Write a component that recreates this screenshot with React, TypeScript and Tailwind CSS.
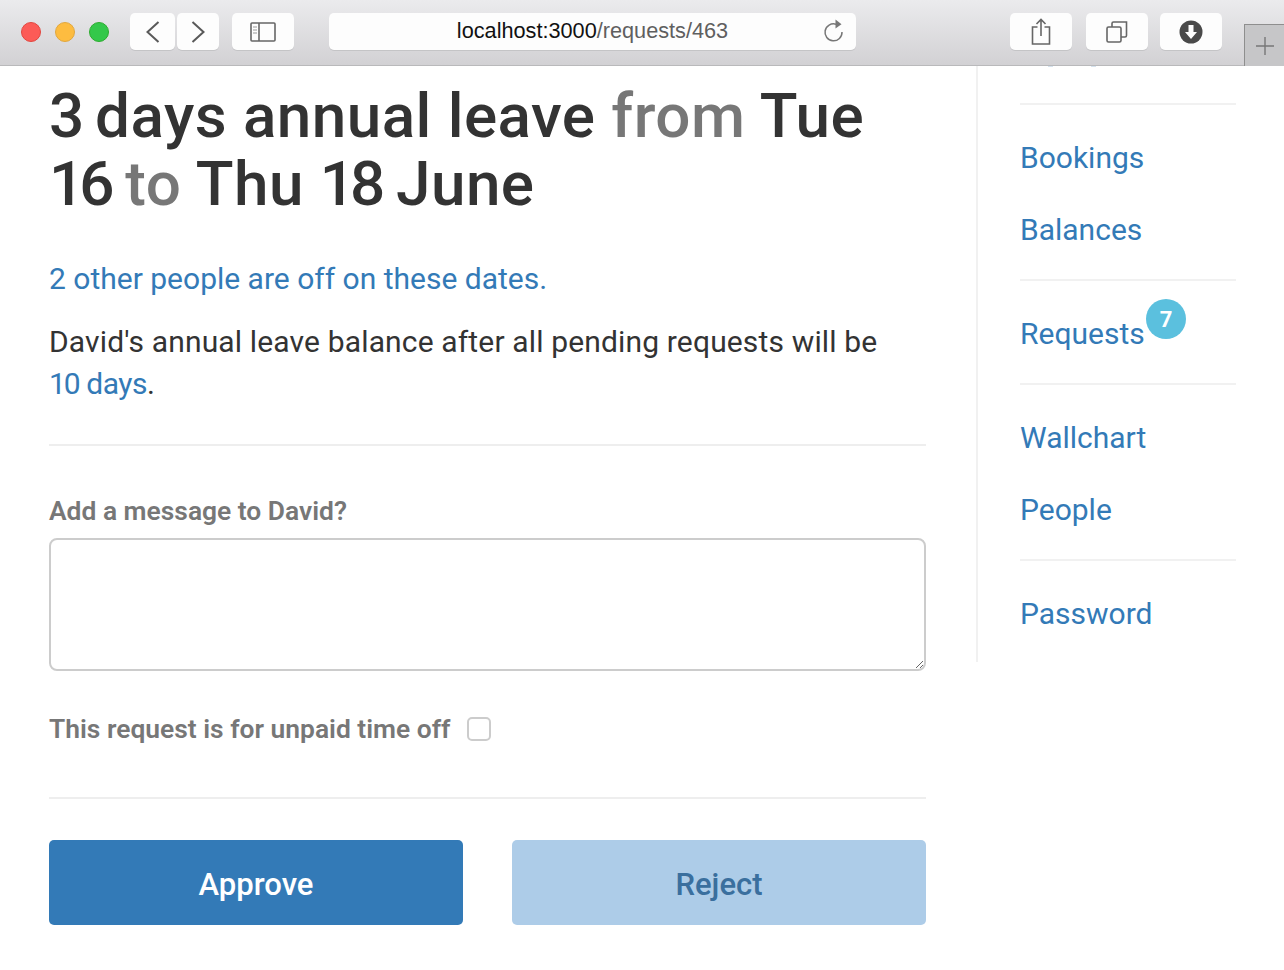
const font = { fontFamily: '"Roboto", "Liberation Sans", sans-serif' }

function ToolButton({ className, children }: { className: string; children: React.ReactNode }) {
  return (
    <div className={`flex h-[37px] items-center justify-center rounded-[5px] bg-[#fdfdfd] shadow-[0_1px_0_#c4c4c6] ${className}`}>
      {children}
    </div>
  )
}

function Toolbar() {
  return (
    <div className="relative flex h-[66px] items-start border-b border-[#b9b9bb] bg-gradient-to-b from-[#ebebed] to-[#d2d1d4] pl-[21px] pt-[13px]">
      <div className="mt-[9px] flex gap-[14px]">
        <span className="size-[20px] rounded-full border border-[#e2463f] bg-[#fc5b57]" />
        <span className="size-[20px] rounded-full border border-[#e1a73e] bg-[#fdbc40]" />
        <span className="size-[20px] rounded-full border border-[#2dac2f] bg-[#34c84a]" />
      </div>
      <ToolButton className="ml-[21px] w-[45px]">
        <svg width="14" height="22" viewBox="0 0 14 22" fill="none" stroke="#595959" strokeWidth="2">
          <path d="M12.500 1L1.500 11l11 10" />
        </svg>
      </ToolButton>
      <ToolButton className="ml-[2px] w-[42px]">
        <svg width="14" height="22" viewBox="0 0 14 22" fill="none" stroke="#595959" strokeWidth="2">
          <path d="M1.500 1l11 10-11 10" />
        </svg>
      </ToolButton>
      <ToolButton className="ml-[13px] w-[62px]">
        <svg width="26" height="20" viewBox="0 0 26 20" fill="none" stroke="#666" strokeWidth="1.6">
          <rect x="1" y="1" width="24" height="18" rx="1" />
          <path d="M9 1v18" />
          <path d="M3 5h4M3 8h4M3 11h4" strokeWidth="1.2" stroke="#999" />
        </svg>
      </ToolButton>
      <ToolButton className="relative ml-[35px] w-[527px]">
        <span className="text-[21.7px] text-[#111]" style={{ fontFamily: '"Liberation Sans", sans-serif' }}>
          localhost:3000<span className="text-[#5f5f5f]">/requests/463</span>
        </span>
        <svg className="absolute right-[10px] top-[5px]" width="24" height="26" viewBox="0 0 24 26" fill="none" stroke="#777" strokeWidth="1.5">
          <path d="M14 6.200A8.500 8.500 0 1 0 20 14" />
          <path d="M13.500 1.500l6 4.700-6 4.200z" fill="#777" stroke="none" />
        </svg>
      </ToolButton>
      <ToolButton className="ml-[154px] w-[62px]">
        <svg width="20" height="27" viewBox="0 0 20 27" fill="none" stroke="#666" strokeWidth="1.6">
          <path d="M6.500 9H1.500v17h17V9h-5" />
          <path d="M10 18V1.500M5.500 6L10 1.500 14.500 6" />
        </svg>
      </ToolButton>
      <ToolButton className="ml-[14px] w-[62px]">
        <svg width="22" height="22" viewBox="0 0 22 22" fill="none" stroke="#666" strokeWidth="1.6">
          <rect x="1" y="6" width="14" height="15" rx="1.500" />
          <path d="M6 6V2.500A1.500 1.500 0 0 1 7.500 1h13v13.500a1.500 1.500 0 0 1-1.500 1.500h-4" />
        </svg>
      </ToolButton>
      <ToolButton className="ml-[12px] w-[62px]">
        <svg width="24" height="24" viewBox="0 0 24 24">
          <circle cx="12" cy="12" r="11.500" fill="#4a4a4a" />
          <path d="M9.500 5h5v7h3.500L12 19l-6-7h3.500z" fill="#fdfdfd" />
        </svg>
      </ToolButton>
      <div className="absolute bottom-[-1px] right-0 flex h-[42px] w-[40px] items-center justify-center border-l border-t border-[#8e8e8e] bg-[#c6c6c8]">
        <svg width="18" height="18" viewBox="0 0 18 18" stroke="#777" strokeWidth="1.4">
          <path d="M9 0v18M0 9h18" />
        </svg>
      </div>
    </div>
  )
}

function SideLink({ children, className = '' }: { children: React.ReactNode; className?: string }) {
  return <a className={`block text-[30px] leading-[36px] text-[#337ab7] ${className}`}>{children}</a>
}

function Sidebar() {
  return (
    <div className="ml-[42px] w-[216px]">
      <div className="relative h-[39px] border-b-2 border-[#f1f1f1]">
        <span className="absolute left-[28px] top-0 h-[1px] w-[5px] bg-[#d5e2ee]" />
        <span className="absolute left-[71px] top-0 h-[1px] w-[5px] bg-[#d5e2ee]" />
      </div>
      <div className="pt-[35px]">
        <SideLink>Bookings</SideLink>
        <SideLink className="mt-[36px]">Balances</SideLink>
      </div>
      <div className="mt-[31px] border-t-2 border-[#f1f1f1] pb-[31px] pt-[35px]">
        <div className="relative">
          <SideLink>Requests</SideLink>
          <span className="absolute left-[126px] top-[-17px] flex size-[40px] items-center justify-center rounded-full bg-[#5bc0de] text-[22px] font-bold text-white">
            7
          </span>
        </div>
      </div>
      <div className="border-t-2 border-[#f1f1f1] pt-[35px]">
        <SideLink>Wallchart</SideLink>
        <SideLink className="mt-[36px]">People</SideLink>
      </div>
      <div className="mt-[31px] border-t-2 border-[#f1f1f1] pt-[35px]">
        <SideLink>Password</SideLink>
      </div>
    </div>
  )
}

export default function App() {
  return (
    <div className="flex h-[970px] flex-col overflow-hidden bg-white" style={font}>
      <Toolbar />
      <div className="flex items-start">
        <div className="h-[596px] w-[978px] border-r-2 border-[#f1f1f1] pl-[49px] pr-[50px]">
          <h1 className="mt-[16px] text-[62px] font-medium leading-[68px] tracking-[0.45px] text-[#333]">
            <span className="tracking-[-5px]">3</span> days annual leave <span className="text-[#777]">from</span> Tue{' '}
            <span className="tracking-[-5px]">16</span> <span className="text-[#777]">to</span> Thu{' '}
            <span className="tracking-[-5px]">18</span> June
          </h1>
          <p className="mt-[40px] text-[30px] leading-[42px] text-[#337ab7]">2 other people are off on these dates.</p>
          <p className="mt-[21px] text-[30px] leading-[42px] tracking-[0.15px] text-[#333]">
            David's annual leave balance after all pending requests will be{' '}
            <span className="whitespace-nowrap text-[#337ab7]">
              <span className="tracking-[-2px]">10</span> <span className="tracking-[-0.5px]">days</span>
            </span>
            .
          </p>
          <div className="mt-[39px] h-[2px] bg-[#eeeeee]" />
          <label className="mt-[44px] block text-[26.400px] font-semibold leading-[42px] text-[#777]">Add a message to David?</label>
          <textarea className="mt-[6px] block h-[133px] w-full rounded-[8px] border-2 border-[#ccc] bg-white" />
          <div className="mt-[37px] flex items-center">
            <span className="w-[418px] text-[26.400px] font-semibold leading-[42px] text-[#777]">This request is for unpaid time off</span>
            <span className="size-[24px] rounded-[5px] border-2 border-[#ccc]" />
          </div>
          <div className="mt-[47px] h-[2px] bg-[#eeeeee]" />
          <div className="mt-[41px] flex justify-between">
            <button className="h-[85px] w-[414px] rounded-[5px] bg-[#337ab7] pt-[5px] text-[31px] font-medium text-white">Approve</button>
            <button className="h-[85px] w-[414px] rounded-[5px] bg-[#adcce8] pt-[5px] text-[31px] font-medium text-[#3a6f9e]">Reject</button>
          </div>
        </div>
        <Sidebar />
      </div>
    </div>
  )
}
